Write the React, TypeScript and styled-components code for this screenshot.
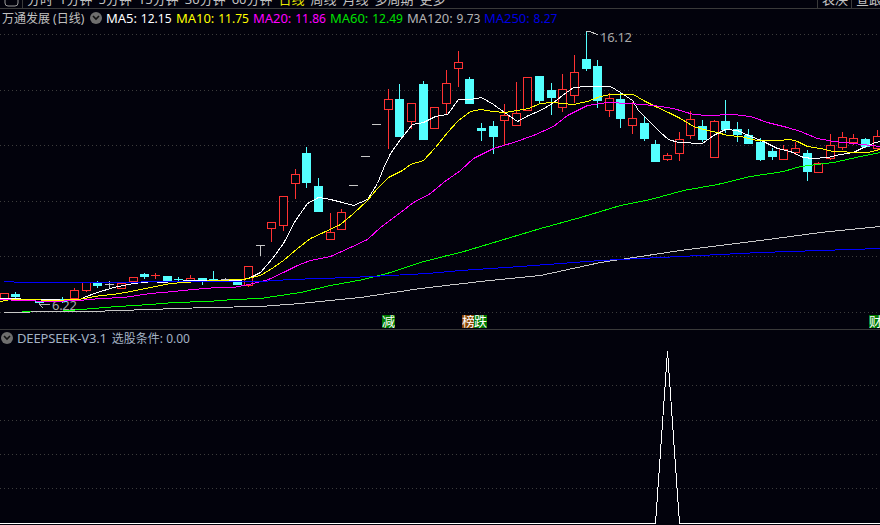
import React from 'react'
import styled, { createGlobalStyle } from 'styled-components'

const FONT = `"Noto Sans", "Noto Sans CJK SC", "Liberation Sans", sans-serif`
const BG = '#02020c'

const GlobalStyle = createGlobalStyle`
html, body { margin: 0; padding: 0; background: ${BG}; }
`

const Page = styled.div`
width: 880px;
height: 525px;
display: flex;
flex-direction: column;
overflow: hidden;
background: ${BG};
font-family: ${FONT};
`
const TopBar = styled.div`
height: 8px;
flex: none;
display: flex;
align-items: flex-end;
overflow: hidden;
border-bottom: 1px solid #3a3a3a;
color: #c4c4c4;
font-size: 13px;
line-height: 17px;
`
const BarIcon = styled.div`
width: 22px;
height: 8px;
flex: none;
border-right: 1px solid #3a3a3a;
svg { display: block; }
`
const PeriodRow = styled.div`
display: flex;
gap: 6px;
padding-left: 4px;
white-space: nowrap;
`
const Period = styled.span<{ $active?: boolean }>`
color: ${p => (p.$active ? '#e8e800' : '#c4c4c4')};
`
const BarCell = styled.div<{ $width: number; $first?: boolean }>`
width: ${p => p.$width}px;
height: 8px;
flex: none;
box-sizing: border-box;
display: flex;
align-items: flex-end;
padding-left: 4px;
white-space: nowrap;
border-left: 1px solid #3a3a3a;
margin-left: ${p => (p.$first ? 'auto' : '0')};
`
const PricePanel = styled.section`
position: relative;
height: 320px;
flex: none;
border-bottom: 1px solid #3a3a3a;
`
const IndicatorPanel = styled.section`
position: relative;
flex: 1;
`
const ChartLayer = styled.svg`
position: absolute;
left: 0;
top: 0;
display: block;
`
const Legend = styled.div`
position: relative;
display: flex;
align-items: center;
font-size: 12px;
white-space: nowrap;
`
const PriceLegend = styled(Legend)`
height: 17px;
padding-left: 2px;
`
const IndicatorLegend = styled(Legend)`
height: 15px;
padding-left: 1px;
color: #a3b2c4;
`
const StockName = styled.span`
color: #c0c0c0;
width: 88px;
flex: none;
`
const MaValue = styled.span<{ $color: string; $width: number }>`
color: ${p => p.$color};
width: ${p => p.$width}px;
flex: none;
`
const MaLabel = styled.span`
font-size: 13px;
letter-spacing: -0.05px;
margin-right: 4px;
`
const IndicatorName = styled.span`
font-size: 13px;
letter-spacing: -0.15px;
margin-right: 5px;
`
const Toggle = styled.span`
width: 12px;
height: 12px;
flex: none;
border-radius: 50%;
background: #6e6e6e;
display: flex;
align-items: center;
justify-content: center;
margin-right: 4px;
svg { display: block; }
`
const Flag = styled.span<{ $left: number; $tone: 'green' | 'brown' }>`
position: absolute;
left: ${p => p.$left}px;
top: 306px;
width: 13px;
height: 13px;
background: ${p => (p.$tone === 'green' ? '#007a00' : '#8a4500')};
color: #fff;
font-size: 13px;
line-height: 13px;
text-align: center;
overflow: hidden;
`
const Tag = styled.text`
fill: #a8a8a8;
font-family: ${FONT};
font-size: 13px;
letter-spacing: -0.3px;
`

type Candle = [number, 'r' | 'c' | 'g', number, number, number, number]

// x, kind, body top, body bottom, wick top, wick bottom
const CANDLES: Candle[] = [
  [4, 'r', 293, 298, 293, 298], [15, 'c', 294, 297, 292, 298], [39, 'c', 301, 303, 301, 303],
  [62, 'c', 299, 302, 297, 303], [74, 'r', 290, 298, 288, 298], [86, 'r', 282, 290, 282, 292],
  [97, 'c', 283, 286, 281, 288], [109, 'g', 284, 284, 281, 288], [121, 'r', 283, 288, 283, 288],
  [133, 'r', 277, 281, 277, 282], [144, 'c', 274, 277, 273, 279], [155, 'r', 275, 275, 273, 279],
  [167, 'c', 276, 282, 276, 283], [178, 'c', 279, 279, 277, 282], [190, 'r', 278, 281, 275, 281],
  [202, 'c', 278, 280, 278, 285], [213, 'c', 279, 279, 271, 281], [225, 'g', 279, 279, 278, 281],
  [237, 'c', 281, 285, 281, 285], [248, 'r', 266, 285, 266, 287], [260, 'g', 245, 245, 245, 256],
  [271, 'r', 222, 228, 222, 242], [283, 'r', 196, 225, 196, 231], [295, 'r', 174, 183, 169, 199],
  [306, 'c', 153, 183, 147, 188], [318, 'c', 186, 212, 178, 212], [330, 'r', 232, 239, 213, 239],
  [341, 'r', 212, 229, 209, 230], [353, 'g', 185, 185, 185, 185], [365, 'g', 156, 156, 156, 156],
  [376, 'g', 124, 124, 124, 124], [388, 'r', 99, 109, 89, 149], [399, 'c', 99, 137, 84, 137],
  [411, 'r', 103, 121, 103, 129], [423, 'c', 84, 140, 81, 140], [434, 'r', 107, 128, 107, 128],
  [446, 'r', 83, 103, 70, 114], [458, 'r', 62, 68, 51, 87], [469, 'c', 79, 104, 77, 104],
  [481, 'c', 128, 131, 123, 141], [493, 'c', 126, 137, 121, 154], [504, 'r', 115, 120, 104, 145],
  [516, 'r', 113, 125, 82, 125], [527, 'r', 77, 110, 77, 110], [539, 'c', 76, 101, 76, 103],
  [551, 'c', 90, 98, 83, 115], [562, 'r', 89, 107, 74, 112], [574, 'r', 72, 95, 55, 103],
  [586, 'c', 59, 69, 31, 71], [597, 'c', 66, 101, 60, 108], [609, 'r', 98, 110, 93, 117],
  [620, 'c', 99, 119, 92, 128], [632, 'r', 118, 125, 102, 134], [644, 'c', 123, 139, 116, 141],
  [655, 'c', 144, 162, 140, 162], [667, 'r', 155, 159, 153, 161], [679, 'r', 139, 153, 132, 161],
  [690, 'r', 119, 135, 111, 139], [702, 'c', 126, 140, 120, 142], [714, 'r', 121, 157, 120, 157],
  [725, 'c', 121, 130, 100, 133], [737, 'c', 129, 135, 122, 142], [748, 'c', 135, 144, 129, 144],
  [760, 'c', 142, 160, 138, 161], [772, 'c', 151, 157, 148, 160], [783, 'r', 149, 159, 145, 159],
  [795, 'r', 148, 152, 142, 155], [807, 'c', 153, 172, 150, 181], [818, 'r', 163, 172, 162, 172],
  [830, 'r', 145, 158, 134, 160], [842, 'r', 137, 147, 132, 150], [853, 'r', 138, 142, 134, 145],
  [865, 'c', 139, 147, 138, 148], [877, 'r', 136, 148, 130, 150],
]

const MA_LINES: { color: string; points: string }[] = [
  {
    color: '#ffffff',
    points: '0,298 40,299 78,300 83,297 97,292 113,287 133,283 153,281 160,282 175,281 190,280 240,280 250,277 260,272 272,258 283,243 295,220 307,203 318,197 330,199 342,202 353,205 367,199 377,183 383,168 390,153 400,139 412,124 423,122 435,116 447,114 458,99 470,99 481,97 493,104 504,112 517,121 528,115 540,110 552,103 562,95 573,87 587,86 610,86 620,92 632,100 638,110 650,122 660,132 668,139 678,142 702,143 713,135 725,129 737,130 748,135 763,141 777,148 790,151 803,157 813,158 827,157 840,154 853,152 863,147 875,142 880,141',
  },
  {
    color: '#ffff00',
    points: '0,301 10,299 30,299 50,300 78,299 100,295 113,294 130,291 150,287 170,283 183,282 215,280 243,279 260,275 273,267 283,260 297,248 310,238 323,232 340,224 353,213 367,200 377,188 388,177 402,170 410,164 423,160 435,147 447,132 458,120 470,111 480,109 493,111 504,112 517,110 528,108 540,103 552,102 573,104 587,101 600,96 610,94 633,94 643,100 657,107 668,112 680,118 693,126 707,130 717,132 727,135 740,136 757,140 777,140 790,139 797,141 807,146 820,148 833,151 860,152 867,152 880,149',
  },
  {
    color: '#ff00ff',
    points: '0,299 20,300 50,301 78,300 100,298 123,297 150,293 173,291 193,289 217,287 233,287 253,283 268,279 283,272 297,265 310,260 330,256 350,247 367,239 380,227 400,212 413,202 430,193 443,182 460,170 473,158 493,148 513,142 533,135 553,126 567,115 587,105 607,102 630,103 653,105 673,108 693,114 707,115 733,114 750,116 767,122 787,127 800,131 817,138 833,141 853,143 880,146',
  },
  {
    color: '#00ff00',
    points: '21,311 57,311 92,308 117,306 150,304 173,302 207,301 233,299 260,298 300,292 330,285 363,279 390,272 420,262 447,255 460,252 500,240 540,228 580,217 620,205 650,199 683,190 717,184 750,176 783,171 800,166 833,162 860,156 880,152',
  },
  {
    color: '#c8c8c8',
    points: '4,312 57,311 90,311 148,309 207,307 260,306 300,303 360,297 420,288 480,281 540,275 600,262 680,250 760,240 820,232 880,226',
  },
  {
    color: '#0000ff',
    points: '4,281 22,282 260,281 290,279 350,277 390,275 427,273 460,270 520,266 600,260 680,256 760,252 880,248',
  },
]

const PRICE_GRID = [34, 90, 145, 201, 256, 312]
const INDICATOR_GRID = [385, 420, 454, 488]

const MAS = [
  { label: 'MA5:', value: '12.15', color: '#ffffff', width: 70 },
  { label: 'MA10:', value: '11.75', color: '#ffff00', width: 77 },
  { label: 'MA20:', value: '11.86', color: '#ff00ff', width: 77 },
  { label: 'MA60:', value: '12.49', color: '#00e000', width: 77 },
  { label: 'MA120:', value: '9.73', color: '#b4b4b4', width: 77 },
  { label: 'MA250:', value: '8.27', color: '#0000e0', width: 80 },
]

const PERIODS = ['分时', '1分钟', '5分钟', '15分钟', '30分钟', '60分钟', '日线', '周线', '月线', '多周期', '更多']

const Chevron = () => (
  <svg width="8" height="6" viewBox="0 0 8 6">
    <path d="M1 1 L4 4 L7 1" fill="none" stroke="#111" strokeWidth="1.6" />
  </svg>
)

const CandleMark: React.FC<{ candle: Candle }> = ({ candle }) => {
  const [x, kind, top, bottom, wickTop, wickBottom] = candle
  const mid = x + 0.5
  if (kind === 'g' || top === bottom) {
    const color = kind === 'g' ? '#c8c8c8' : kind === 'r' ? '#ff3232' : '#54ffff'
    return (
      <g stroke={color}>
        <line x1={x - 4} x2={x + 5} y1={top + 0.5} y2={top + 0.5} />
        <line x1={mid} x2={mid} y1={wickTop} y2={wickBottom} />
      </g>
    )
  }
  if (kind === 'c') {
    return (
      <g>
        <line x1={mid} x2={mid} y1={wickTop} y2={wickBottom} stroke="#54ffff" />
        <rect x={x - 4} y={top} width={9} height={bottom - top} fill="#54ffff" />
      </g>
    )
  }
  return (
    <g>
      <line x1={mid} x2={mid} y1={wickTop} y2={wickBottom} stroke="#ff3232" />
      <rect x={x - 3.5} y={top + 0.5} width={8} height={bottom - top} fill={BG} stroke="#ff3232" />
    </g>
  )
}

const PriceChart = () => (
  <ChartLayer width="880" height="320" viewBox="0 9 880 320" shapeRendering="crispEdges">
    {PRICE_GRID.map(y => (
      <line key={y} x1="0" x2="880" y1={y + 0.5} y2={y + 0.5} stroke="#3c3c3c" strokeDasharray="1 3" />
    ))}
    <Tag x="52" y="310">6.22</Tag>
    <path d="M43 300 L39 304 L43 308 M39 304 H50" fill="none" stroke="#b0b0b0" />
    {CANDLES.map(c => (
      <CandleMark key={c[0]} candle={c} />
    ))}
    <g transform="translate(0.5 0.5)">
      {MA_LINES.map(l => (
        <polyline key={l.color} points={l.points} fill="none" stroke={l.color} />
      ))}
    </g>
    <polyline points="586,32 589,31 598,35" fill="none" stroke="#c8c8c8" />
    <Tag x="600" y="42">16.12</Tag>
  </ChartLayer>
)

const IndicatorChart = () => (
  <ChartLayer width="880" height="195" viewBox="0 330 880 195" shapeRendering="crispEdges">
    {INDICATOR_GRID.map(y => (
      <line key={y} x1="0" x2="880" y1={y + 0.5} y2={y + 0.5} stroke="#3c3c3c" strokeDasharray="1 3" />
    ))}
    <polyline points="0,523.5 655.5,523.5 667.5,351 679.5,523.5 880,523.5" fill="none" stroke="#ffffff" />
  </ChartLayer>
)

export default function App() {
  return (
    <Page>
      <GlobalStyle />
      <TopBar>
        <BarIcon>
          <svg width="22" height="8" viewBox="0 0 22 8">
            <path d="M5 0 V3 Q5 6 8 6 H15 Q18 6 18 3 V0" fill="none" stroke="#9a9a9a" />
          </svg>
        </BarIcon>
        <PeriodRow>
          {PERIODS.map(p => (
            <Period key={p} $active={p === '日线'}>{p}</Period>
          ))}
        </PeriodRow>
        <BarCell $width={34} $first>表决</BarCell>
        <BarCell $width={29}>查跟</BarCell>
      </TopBar>
      <PricePanel>
        <PriceChart />
        <PriceLegend>
          <StockName>万通发展 (日线)</StockName>
          <Toggle><Chevron /></Toggle>
          {MAS.map(m => (
            <MaValue key={m.label} $color={m.color} $width={m.width}>
              <MaLabel>{m.label}</MaLabel>{m.value}
            </MaValue>
          ))}
        </PriceLegend>
        <Flag $left={382} $tone="green">减</Flag>
        <Flag $left={462} $tone="brown">榜</Flag>
        <Flag $left={474} $tone="green">跌</Flag>
        <Flag $left={869} $tone="green">财</Flag>
      </PricePanel>
      <IndicatorPanel>
        <IndicatorChart />
        <IndicatorLegend>
          <Toggle><Chevron /></Toggle>
          <IndicatorName>DEEPSEEK-V3.1</IndicatorName>
          <span>选股条件: 0.00</span>
        </IndicatorLegend>
      </IndicatorPanel>
    </Page>
  )
}
